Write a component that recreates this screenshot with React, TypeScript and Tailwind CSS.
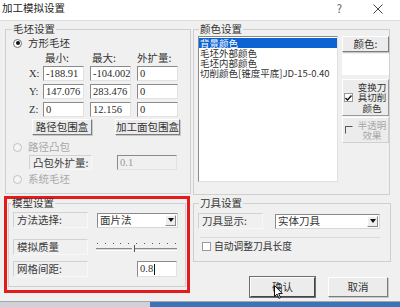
import type { ReactNode } from "react";

type RadioProps = { checked?: boolean; disabled?: boolean; label: string };

const Radio = ({ checked, disabled, label }: RadioProps) => (
  <div className="flex h-[12px] items-center">
    <span
      className={
        disabled
          ? "flex h-[9px] w-[9px] items-center justify-center rounded-full border border-[#c2c2c2] bg-[#f4f4f4]"
          : "flex h-[9px] w-[9px] items-center justify-center rounded-full border border-[#707070] bg-white"
      }
    >
      {checked && <span className="h-[4px] w-[4px] rounded-full bg-[#111]" />}
    </span>
    <span
      className={
        disabled
          ? "ml-[6px] text-[10.5px] leading-[12px] text-[#a8a8a8]"
          : "ml-[6px] text-[10.5px] leading-[12px] text-[#333]"
      }
    >
      {label}
    </span>
  </div>
);

// sunken edit box, the usual win32 look
const Edit = ({ className, children }: { className: string; children?: ReactNode }) => (
  <div
    className={`flex items-center overflow-hidden whitespace-nowrap border border-t-[#8a8a8a] border-l-[#8a8a8a] border-r-[#e2e2e2] border-b-[#e2e2e2] pl-[2px] font-['Liberation_Serif',serif] text-[10.5px] leading-[12px] ${className}`}
  >
    {children}
  </div>
);

const Btn = ({ className, children }: { className: string; children: ReactNode }) => (
  <div
    className={`flex items-center justify-center whitespace-nowrap border border-t-white border-l-white border-r-[#7c7c7c] border-b-[#7c7c7c] bg-[#ececec] text-[10.5px] leading-[12px] text-[#333] shadow-[1px_1px_0_#c8c8c8] ${className}`}
  >
    {children}
  </div>
);

const StaticLabel = ({ className, children }: { className: string; children: ReactNode }) => (
  <div
    className={`flex items-center border border-t-[#d2d2d2] border-l-[#d2d2d2] border-r-[#f8f8f8] border-b-[#f8f8f8] pl-[3px] text-[10.5px] leading-[12px] text-[#3a3a3a] ${className}`}
  >
    {children}
  </div>
);

const Combo = ({ className, value }: { className: string; value: string }) => (
  <div
    className={`flex items-center border border-t-[#8a8a8a] border-l-[#8a8a8a] border-r-[#d8d8d8] border-b-[#d8d8d8] bg-white text-[10.5px] leading-[12px] text-[#333] ${className}`}
  >
    <span className="pl-[2px]">{value}</span>
    <span className="ml-auto mr-[1px] flex h-[11px] w-[11px] items-center justify-center border border-t-white border-l-white border-r-[#888] border-b-[#888] bg-[#eeeeee]">
      <svg width="6" height="4" viewBox="0 0 6 4">
        <path d="M0 0h6L3 4z" fill="#111" />
      </svg>
    </span>
  </div>
);

const Check = ({ checked, disabled }: { checked?: boolean; disabled?: boolean }) => (
  <span
    className={
      disabled
        ? "flex h-[8px] w-[8px] shrink-0 items-center justify-center border border-t-[#555] border-l-[#555] border-r-transparent border-b-transparent"
        : "flex h-[9px] w-[9px] shrink-0 items-center justify-center border border-[#9a9a9a] bg-white"
    }
  >
    {checked && (
      <svg width="7" height="6" viewBox="0 0 7 6">
        <path d="M0.5 3l2 2 4-4.5" stroke="#111" strokeWidth="1.4" fill="none" />
      </svg>
    )}
  </span>
);

export default function App() {
  return (
    <div className="relative flex h-[307px] w-[400px] flex-col overflow-hidden bg-[#f0f0f0] font-['Noto_Sans_CJK_SC','Noto_Sans',sans-serif] text-[#2a2a2a]">
      {/* title bar */}
      <div className="flex h-[21px] items-start border-b border-[#dcdcdc] bg-white pl-[2px] pt-[2px]">
        <span className="text-[10.5px] leading-[12px] text-[#222]">加工模拟设置</span>
        <span className="ml-auto text-[11px] leading-[12px] text-[#555]">?</span>
        <svg className="ml-[31px] mr-[17px] mt-[2px]" width="10" height="10" viewBox="0 0 10 10">
          <path d="M0.5 0.5l9 9M9.5 0.5l-9 9" stroke="#444" strokeWidth="1" />
        </svg>
      </div>

      {/* upper groups */}
      <div className="mt-[2px] flex items-start gap-[2px] pl-[5px]">
        <fieldset className="h-[171px] w-[186px] border border-[#cfcfcf]">
          <legend className="ml-[6px] px-[1px] text-[10.5px] leading-[12px] text-[#333]">毛坯设置</legend>
          <div className="pl-[7px] pt-[2px]">
            <Radio checked label="方形毛坯" />
            <div className="ml-[16px] mt-[3px] flex h-[12px] text-[10.5px] leading-[12px] text-[#333]">
              <span className="w-[14px]" />
              <span className="w-[41px] pl-[2px]">最小:</span>
              <span className="ml-[6px] w-[41px] pl-[2px]">最大:</span>
              <span className="ml-[6px] w-[41px]">外扩量:</span>
            </div>
            {[
              ["X:", "-188.91", "-104.002", "0", "mt-[2px]"],
              ["Y:", "147.076", "283.476", "0", "mt-[3px]"],
              ["Z:", "0", "12.156", "0", "mt-[3px]"],
            ].map(([axis, min, max, ext, mt]) => (
              <div key={axis} className={`ml-[16px] flex h-[15px] ${mt}`}>
                <span className="w-[14px] font-['Liberation_Serif',serif] text-[10.5px] leading-[15px] text-[#333]">{axis}</span>
                <Edit className="h-[15px] w-[41px] bg-white">{min}</Edit>
                <Edit className="ml-[6px] h-[15px] w-[41px] bg-white">{max}</Edit>
                <Edit className="ml-[6px] h-[15px] w-[41px] bg-white">{ext}</Edit>
              </div>
            ))}
            <div className="mt-[2px] flex h-[16px]">
              <Btn className="ml-[19px] h-[16px] w-[60px]">路径包围盒</Btn>
              <Btn className="ml-[23px] h-[16px] w-[65px]">加工面包围盒</Btn>
            </div>
            <div className="mt-[6px]">
              <Radio disabled label="路径凸包" />
            </div>
            <div className="mt-[2px] flex h-[15px]">
              <StaticLabel className="ml-[16px] h-[15px] w-[63px]">凸包外扩量:</StaticLabel>
              <Edit className="ml-[25px] h-[15px] w-[60px] bg-[#f0f0f0] text-[#9a9a9a]">0.1</Edit>
            </div>
            <div className="mt-[3px]">
              <Radio disabled label="系统毛坯" />
            </div>
          </div>
        </fieldset>

        <fieldset className="h-[172px] w-[197px] border border-[#cfcfcf]">
          <legend className="ml-[5px] px-[1px] text-[10.5px] leading-[12px] text-[#333]">颜色设置</legend>
          <div className="flex pl-[4px] pt-[1px]">
            <div className="h-[146px] w-[140px] border border-t-[#8a8a8a] border-l-[#8a8a8a] border-r-[#e0e0e0] border-b-[#e0e0e0] bg-white pt-[1px] text-[9.5px] leading-[10px] text-[#333]">
              <div className="h-[10px] whitespace-nowrap bg-[#0c63d2] pl-[1px] text-white">背景颜色</div>
              <div className="h-[10px] whitespace-nowrap pl-[1px]">毛坯外部颜色</div>
              <div className="h-[10px] whitespace-nowrap pl-[1px]">毛坯内部颜色</div>
              <div className="h-[10px] whitespace-nowrap pl-[1px]">切削颜色[锥度平底]JD-15-0.40</div>
            </div>
            <div className="ml-[4px] flex w-[47px] flex-col">
              <Btn className="h-[16px] w-[47px]">颜色:</Btn>
              <div className="mt-[2px] h-[21px] w-[47px] bg-white" />
              <div className="mt-[4px] flex h-[37px] w-[47px] items-center border border-t-white border-l-white border-r-[#9a9a9a] border-b-[#9a9a9a] bg-[#ececec] pl-[1px]">
                <Check checked />
                <span className="ml-[4px] w-[30px] text-center text-[9.5px] leading-[10.5px] text-[#333]">变换刀具切削颜色</span>
              </div>
              <div className="mt-[1px] flex h-[26px] w-[47px] items-center border border-t-white border-l-white border-r-[#d0d0d0] border-b-[#d0d0d0] bg-[#ececec] pl-[2px]">
                <Check disabled />
                <span className="ml-[4px] w-[30px] text-center text-[9.5px] leading-[10.5px] text-[#a8a8a8]">半透明效果</span>
              </div>
            </div>
          </div>
        </fieldset>
      </div>

      {/* lower groups */}
      <div className="flex items-start">
        <div className="ml-[4px] mt-[1px] h-[97px] w-[186px] border-[3px] border-[#e31b1d] px-[1px]">
          <fieldset className="h-[88px] w-[178px] border border-[#cfcfcf]">
            <legend className="ml-[2px] px-[1px] text-[10.5px] leading-[8px] text-[#333]">模型设置</legend>
            <div className="pl-[4px] pt-[5px]">
              <div className="flex h-[16px] items-center">
                <StaticLabel className="h-[16px] w-[75px]">方法选择:</StaticLabel>
                <Combo className="ml-[9px] h-[15px] w-[81px]" value="面片法" />
              </div>
              <div className="mt-[11px] flex h-[16px]">
                <StaticLabel className="h-[16px] w-[75px]">模拟质量</StaticLabel>
                <div className="relative ml-[8px] h-[16px] w-[81px]">
                  <div className="mt-[4px] flex h-[1px] justify-between px-[1px]">
                    {Array.from({ length: 11 }).map((_, i) => (
                      <span key={i} className="h-[1px] w-[1px] bg-[#555]" />
                    ))}
                  </div>
                  <div className="mt-[4px] h-[3px] border-t border-t-[#8a8a8a] border-b border-b-white bg-[#d8d8d8]" />
                  <div className="absolute left-[36px] top-[6px] h-[7px] w-[3px] border-r border-[#555] bg-[#f0f0f0]" />
                </div>
              </div>
              <div className="mt-[6px] flex h-[16px]">
                <StaticLabel className="h-[16px] w-[75px]">网格间距:</StaticLabel>
                <Edit className="ml-[49px] h-[16px] w-[40px] bg-white text-[#333]">
                  0.8<span className="ml-[1px] h-[11px] w-px bg-[#111]" />
                </Edit>
              </div>
            </div>
          </fieldset>
        </div>

        <div className="ml-[3px] w-[198px]">
          <fieldset className="mt-[2px] h-[65px] w-[198px] border border-[#cfcfcf]">
            <legend className="ml-[5px] px-[1px] text-[10.5px] leading-[12px] text-[#333]">刀具设置</legend>
            <div className="pl-[4px] pt-[4px]">
              <div className="flex h-[16px] items-center">
                <StaticLabel className="h-[16px] w-[65px]">刀具显示:</StaticLabel>
                <Combo className="ml-[12px] h-[15px] w-[105px]" value="实体刀具" />
              </div>
              <div className="ml-[2px] mt-[8px] h-px w-[180px] bg-[#dadada]" />
              <div className="mt-[2px] flex h-[12px] items-center pl-[4px]">
                <Check />
                <span className="ml-[3px] text-[9.75px] leading-[12px] text-[#333]">自动调整刀具长度</span>
              </div>
            </div>
          </fieldset>
          <div className="mt-[15px] flex h-[20px]">
            <Btn className="ml-[57px] h-[20px] w-[65px] border-r-[#444] border-b-[#444] outline outline-1 outline-[#6d6d6d]">确认</Btn>
            <Btn className="ml-[13px] h-[20px] w-[60px]">取消</Btn>
          </div>
        </div>
      </div>

      {/* taskbar edge under the dialog */}
      <div className="mt-auto flex h-[6px] border-t border-[#a6a6a6]">
        <div className="w-[150px] bg-[#cfd3d9]" />
        <div className="flex-1 bg-[#3c73b8]" />
      </div>

      {/* mouse pointer over 确认 */}
      <svg className="absolute left-[274px] top-[285px]" width="9" height="14" viewBox="0 0 9 14">
        <path d="M0.5 0.5v11l2.6-2.4 1.8 4.2 1.6-0.7-1.8-4.1h3.6z" fill="#fff" stroke="#111" strokeWidth="1" />
      </svg>
    </div>
  );
}
